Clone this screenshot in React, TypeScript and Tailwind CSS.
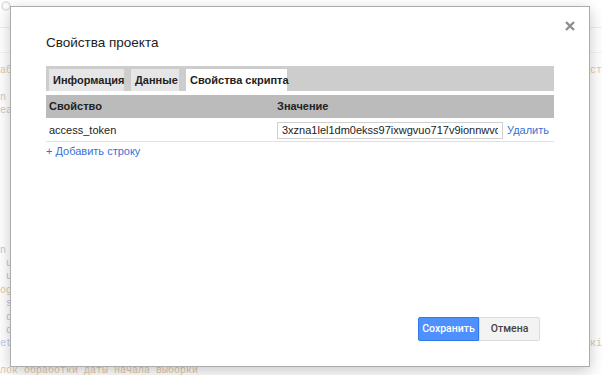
import { useState } from "react";

const topLines = [
  { l: "або", c: "text-[#e3c7a9]", r: "ст" },
  { l: "", c: "", r: "" },
  { l: "n i", c: "text-[#c9c9c9]", r: "" },
  { l: "ea", c: "text-[#c9c9c9]", r: "" },
  { l: "  .r", c: "text-[#cfcfcf]", r: "" },
  { l: "  .r", c: "text-[#cfcfcf]", r: "" },
  { l: "  .r", c: "text-[#cfcfcf]", r: "" },
  { l: "  .r", c: "text-[#cfcfcf]", r: "" },
  { l: "  .r", c: "text-[#cfcfcf]", r: "" },
  { l: "  .r", c: "text-[#cfcfcf]", r: "" },
  { l: "  .r", c: "text-[#cfcfcf]", r: "" },
  { l: "  .r", c: "text-[#cfcfcf]", r: "" },
];

const bottomLines = [
  { l: "n i", c: "text-[#c9c9c9]", r: "" },
  { l: " u", c: "text-[#c3b8ee]", r: "" },
  { l: " u", c: "text-[#c3b8ee]", r: "" },
  { l: "og", c: "text-[#e3c7a9]", r: "" },
  { l: " s", c: "text-[#c3b8ee]", r: "" },
  { l: " d", c: "text-[#c3b8ee]", r: "" },
  { l: " d", c: "text-[#c3b8ee]", r: "" },
  { l: "et", c: "text-[#bccbef]", r: "окі" },
  { l: "", c: "", r: "" },
  { l: "лок обработки даты начала выборки", c: "text-[#e3c7a9]", r: "" },
];

function CodeLine({ l, c, r }: { l: string; c: string; r: string }) {
  return (
    <div className={`flex h-[13.4px] items-center justify-between whitespace-pre ${c}`}>
      <span>{l}</span>
      <span className="text-[#e3c7a9]">{r}</span>
    </div>
  );
}

function Background() {
  return (
    <div className="font-['Liberation_Mono',monospace] text-[10px] leading-[13.4px]">
      <div className="flex h-[28px] items-start border-b border-[#efefef] pl-[1px] pt-[1px]">
        <div className="h-[10px] w-[10px] rounded-full border-2 border-[#e4e4e4]" />
      </div>
      <div className="h-[25px] border-b border-[#f2f2f2]" />
      <div className="pt-[11px]">
        {topLines.map((ln, i) => (
          <CodeLine key={i} {...ln} />
        ))}
      </div>
      <div className="pt-[19px]">
        {bottomLines.map((ln, i) => (
          <CodeLine key={i} {...ln} />
        ))}
      </div>
    </div>
  );
}

const tabs = ["Информация", "Данные", "Свойства скрипта"];
const tabWidths = ["w-[75px]", "w-[48px]", "w-[101px]"];

export default function App() {
  const [active, setActive] = useState(2);

  return (
    <div className="relative h-[375px] w-[602px] overflow-hidden bg-white">
      <Background />

      <div className="absolute left-[10px] top-[6px] flex h-[361px] w-[580px] flex-col border border-[#acacac] bg-white font-['Liberation_Sans',Arial,sans-serif] shadow-[0_4px_14px_rgba(0,0,0,0.22)]">
        <button className="absolute right-[14px] top-[14px] flex h-[10px] w-[10px] items-center justify-center">
          <svg width="10" height="10" viewBox="0 0 10 10">
            <path d="M1 1L9 9M9 1L1 9" stroke="#8f8f8f" strokeWidth="2.4" />
          </svg>
        </button>

        <div className="px-[35px] pt-[27px]">
          <h2 className="text-[13.5px] leading-[18px] text-[#222]">Свойства проекта</h2>

          <div className="mt-[14px] flex h-[25px] gap-[7px] bg-[#cdcdcd] pl-[3px] pt-[3px]">
            {tabs.map((t, i) => (
              <button
                key={t}
                onClick={() => setActive(i)}
                className={`${tabWidths[i]} h-[22px] whitespace-nowrap pl-[4px] text-left text-[11px] font-bold leading-[22px] text-[#222] ${
                  active === i ? "bg-white" : "bg-[#e6e6e6]"
                }`}
              >
                {t}
              </button>
            ))}
          </div>

          <div className="mt-[4px] flex h-[23px] items-center bg-[#bbbbbb] text-[11px] font-bold text-[#222]">
            <div className="w-[231px] pl-[3px]">Свойство</div>
            <div>Значение</div>
          </div>

          <div className="flex h-[24px] items-center border-b border-[#d4e4f7] pt-[1px] text-[11px] text-[#222]">
            <div className="w-[231px] pl-[3px]">access_token</div>
            <input
              readOnly
              value="3xzna1lel1dm0ekss97ixwgvuo717v9ionnwvq2k"
              className="h-[17px] w-[226px] border border-[#d0d0d0] px-[4px] text-[11px] text-[#222] outline-none"
            />
            <a className="ml-[4px] cursor-pointer text-[11px] text-[#3b6fd6]">Удалить</a>
          </div>

          <a className="mt-[1px] block cursor-pointer text-[11px] leading-[16px] text-[#3b6fd6]">
            + Добавить строку
          </a>
        </div>

        <div className="flex-1" />

        <div className="flex justify-end pb-[25px] pr-[49px] font-['Roboto',sans-serif]">
          <button className="h-[24px] w-[61px] rounded-l-[2px] border border-[#3079ed] bg-[#4d90fe] text-[10.5px] font-medium text-white">
            Сохранить
          </button>
          <button className="h-[24px] w-[61px] rounded-r-[2px] border border-[#dcdcdc] bg-[#f3f3f3] text-[10.5px] font-medium text-[#444]">
            Отмена
          </button>
        </div>
      </div>
    </div>
  );
}
